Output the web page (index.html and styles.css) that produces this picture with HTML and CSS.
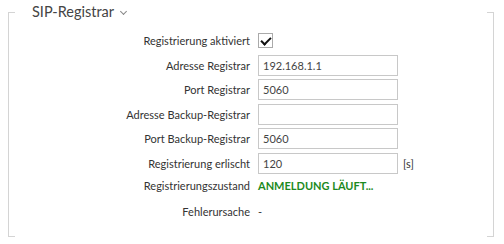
FILE: index.html
```html
<!DOCTYPE html>
<html>
  <head>
    <title>SIP-Registrar</title>
    <link rel="stylesheet" href="styles.css">
  </head>
  <body>
    <div class="panel">
      <h2 class="panel-title">SIP-Registrar <span class="chevron"></span></h2>
      <div class="form">
        <label class="form-label">Registrierung aktiviert</label>
        <div class="form-field"><span class="checkbox checked"></span></div>

        <label class="form-label" for="addr">Adresse Registrar</label>
        <div class="form-field"><input id="addr" type="text" value="192.168.1.1"></div>

        <label class="form-label" for="port">Port Registrar</label>
        <div class="form-field"><input id="port" type="text" value="5060"></div>

        <label class="form-label" for="backupAddr">Adresse Backup-Registrar</label>
        <div class="form-field"><input id="backupAddr" type="text" value=""></div>

        <label class="form-label" for="backupPort">Port Backup-Registrar</label>
        <div class="form-field"><input id="backupPort" type="text" value="5060"></div>

        <label class="form-label" for="expire">Registrierung erlischt</label>
        <div class="form-field"><input id="expire" type="text" value="120"><span class="unit">[s]</span></div>

        <label class="form-label status-row">Registrierungszustand</label>
        <div class="form-field status-row"><span class="status">ANMELDUNG LÄUFT...</span></div>

        <label class="form-label error-row">Fehlerursache</label>
        <div class="form-field error-row"><span class="value">-</span></div>
      </div>
    </div>
  </body>
</html>
```
FILE: styles.css
```css
/* Settings section: SIP registrar */
body {
  margin: 0;
  padding: 12px 10px 7px 8px;
  background-color: #fff;
  font-family: Lato, "Noto Sans", sans-serif;
  font-size: 11px;
  color: #333; /* Dark grey */
}

.panel {
  display: flow-root;
  height: 225px;
  box-sizing: border-box;
  border-left: 1px solid #d4d4d4;
  border-right: 1px solid #d4d4d4;
  /* short ticks at the four corners */
  background:
    linear-gradient(#d4d4d4, #d4d4d4) left top / 6px 1px no-repeat,
    linear-gradient(#d4d4d4, #d4d4d4) right top / 6px 1px no-repeat,
    linear-gradient(#d4d4d4, #d4d4d4) left bottom / 6px 1px no-repeat,
    linear-gradient(#d4d4d4, #d4d4d4) right bottom / 6px 1px no-repeat;
}

.panel-title {
  margin: -9px 0 0 23px;
  font-size: 14.5px;
  font-weight: normal;
  line-height: 18px;
  color: #444;
}

.chevron {
  display: inline-block;
  width: 4px;
  height: 4px;
  margin: 0 0 3px 3px;
  border-right: 1px solid #888;
  border-bottom: 1px solid #888;
  transform: rotate(45deg);
  vertical-align: middle;
}

.form {
  display: grid;
  grid-template-columns: 241px 1fr;
  column-gap: 8px;
  row-gap: 3.5px;
  margin-top: 9px;
}

.form-label {
  text-align: right;
  line-height: 21px;
}

.form-field {
  display: flex;
  align-items: center;
  min-height: 21px;
}

input {
  width: 140px;
  height: 21px;
  box-sizing: border-box;
  padding: 0 4px;
  border: 1px solid #c8c8c8;
  font-family: inherit;
  font-size: 11px;
  color: #444;
}

.checkbox {
  width: 15px;
  height: 15px;
  box-sizing: border-box;
  border: 1px solid #aaa;
  position: relative;
}

.checkbox.checked::after { /* check mark */
  content: "";
  position: absolute;
  left: 4px;
  top: 1px;
  width: 4px;
  height: 8px;
  border-right: 2px solid #111;
  border-bottom: 2px solid #111;
  transform: rotate(45deg);
}

.unit {
  margin-left: 5px;
}

.status {
  font-weight: bold;
  color: #1d8a1d; /* Green */
}

.status-row {
  margin-top: -2px;
}

.error-row {
  margin-top: 1px;
}
```
